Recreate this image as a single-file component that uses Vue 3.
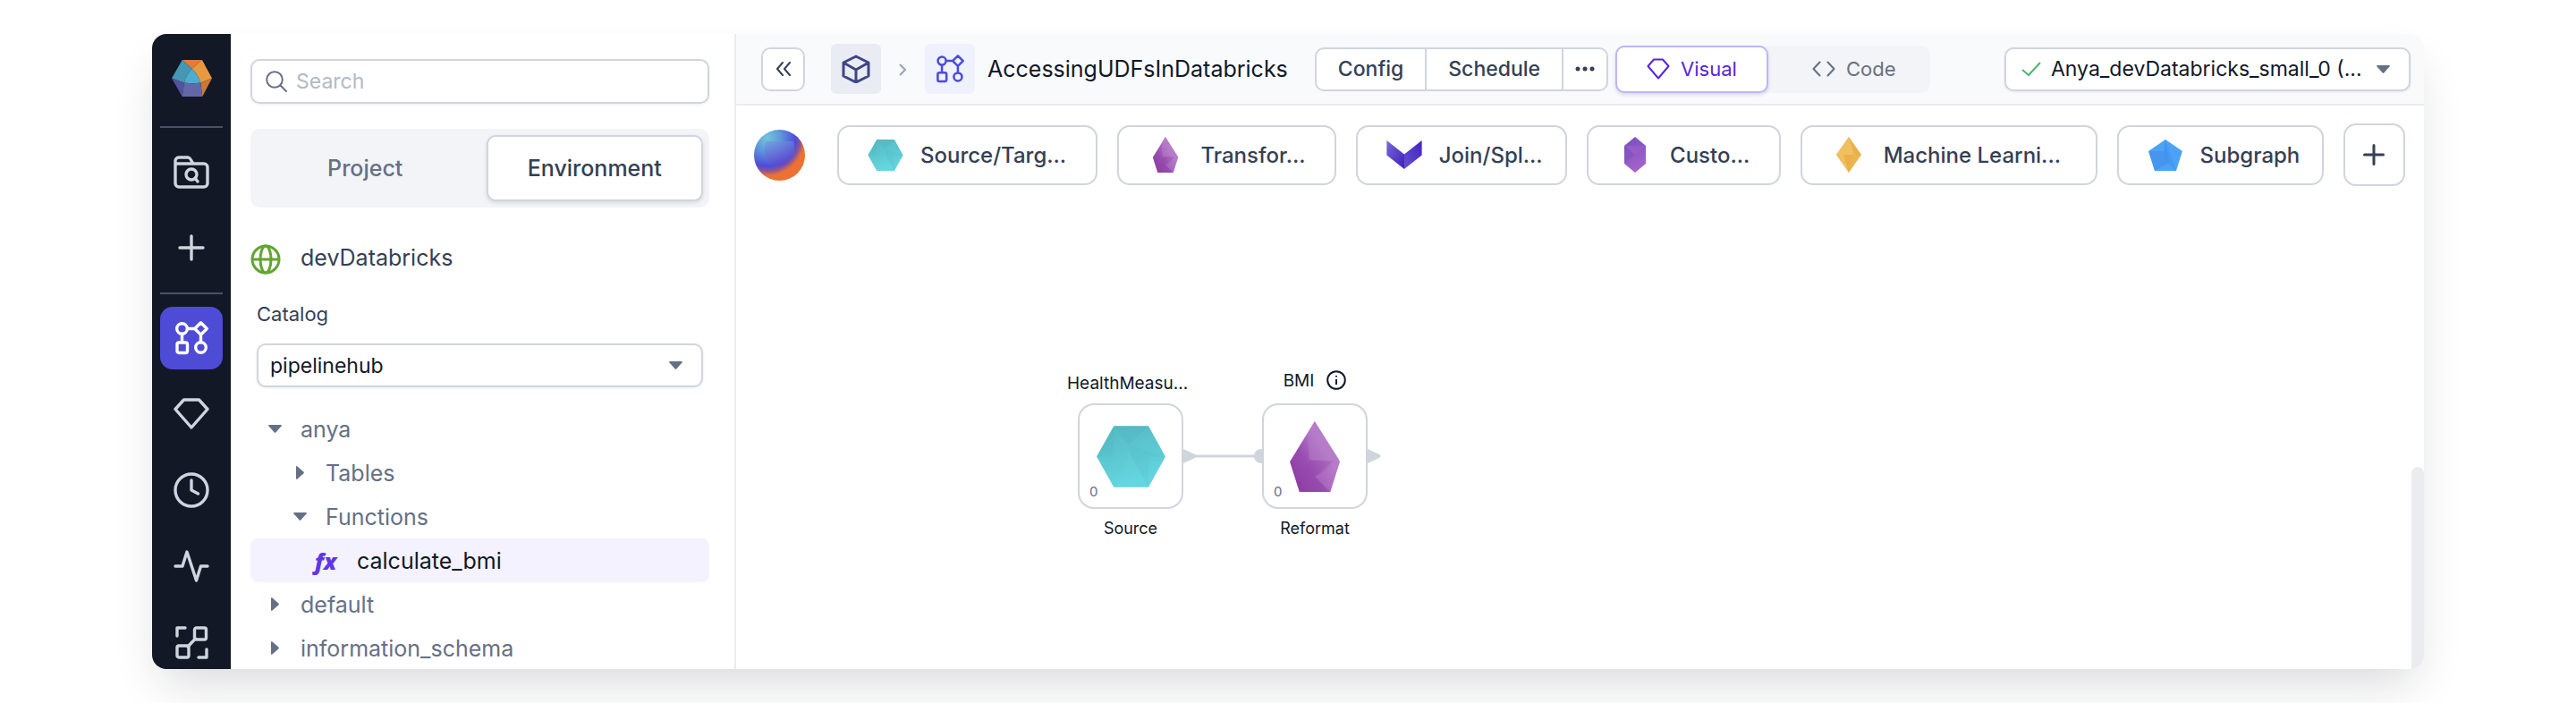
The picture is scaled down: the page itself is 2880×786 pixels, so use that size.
<script setup>
import { ref } from 'vue'

const search = ref('')
const panelTab = ref('Environment')
const view = ref('visual')

const tree = [
  { name: 'anya', level: 0, state: 'open' },
  { name: 'Tables', level: 1, state: 'closed' },
  { name: 'Functions', level: 1, state: 'open' },
  { name: 'calculate_bmi', level: 2, state: 'leaf' },
  { name: 'default', level: 0, state: 'closed' },
  { name: 'information_schema', level: 0, state: 'closed' },
]

const gems = [
  { label: 'Source/Targ...', icon: 'gem-source', share: 292 },
  { label: 'Transfor...', icon: 'gem-transform', share: 244 },
  { label: 'Join/Spl...', icon: 'gem-join', share: 236 },
  { label: 'Custo...', icon: 'gem-custom', share: 216 },
  { label: 'Machine Learni...', icon: 'gem-ml', share: 333 },
  { label: 'Subgraph', icon: 'gem-subgraph', share: 231 },
]
</script>

<template>
  <svg class="defs" aria-hidden="true">
    <defs>
      <linearGradient id="g-source" x1="0" y1="0" x2="0.3" y2="1">
        <stop offset="0" stop-color="#55b8c1" />
        <stop offset="1" stop-color="#63d5df" />
      </linearGradient>
      <linearGradient id="g-transform" x1="0.1" y1="0.8" x2="0.65" y2="0.35">
        <stop offset="0" stop-color="#8e3fa6" />
        <stop offset="0.45" stop-color="#9a4eb1" />
        <stop offset="1" stop-color="#b67cc8" />
      </linearGradient>
      <linearGradient id="g-join-l" x1="0" y1="0" x2="1" y2="1">
        <stop offset="0" stop-color="#7a68d6" />
        <stop offset="1" stop-color="#3d1fbb" />
      </linearGradient>
      <linearGradient id="g-join-r" x1="1" y1="0" x2="0" y2="1">
        <stop offset="0" stop-color="#4423c2" />
        <stop offset="1" stop-color="#674fd0" />
      </linearGradient>
      <linearGradient id="g-custom" x1="0" y1="0" x2="0.3" y2="1">
        <stop offset="0" stop-color="#7350bd" />
        <stop offset="1" stop-color="#a562cb" />
      </linearGradient>
    </defs>
    <symbol id="gem-source" viewBox="0 0 231 206">
      <path fill="url(#g-source)" d="M0 103 58 0h116l57 103-57 103H58z" />
      <path fill="#48a9b3" opacity=".14" d="M58 0h116l-67 64zM0 103 58 0v103z" />
      <path fill="#72dce6" opacity=".12" d="M58 0 174 206H58l49-103z" />
      <path fill="#4bb4bf" opacity=".14" d="M107 64 231 103h-57v103l-57-103z" />
    </symbol>
    <symbol id="gem-transform" viewBox="0 0 167 236">
      <path fill="url(#g-transform)" d="m83 0 84 135-32 101H32L0 135z" />
      <path fill="#b67cc8" opacity=".5" d="m83 0 84 130H66L58 45z" />
      <path fill="#9344aa" opacity=".3" d="m66 130 80 4-64 51 53 51H32l16-70z" />
      <path fill="#b67cc8" opacity=".4" d="m167 135-32 101-51-51z" />
    </symbol>
    <symbol id="gem-join" viewBox="0 0 38 31">
      <path fill="url(#g-join-l)" d="m0 0 19 15v16L0 16z" />
      <path fill="url(#g-join-r)" d="M38 0 19 15v16l19-15z" />
    </symbol>
    <symbol id="gem-custom" viewBox="0 0 24 40">
      <path fill="url(#g-custom)" d="m12 0 12 10v20L12 40 0 30V10z" />
      <path fill="#a15fc6" opacity=".6" d="M0 10h24L12 20z" />
      <path fill="#7449b8" opacity=".3" d="m0 10 12 10L0 30z" />
    </symbol>
    <symbol id="gem-ml" viewBox="0 0 28 40">
      <path fill="#edb54f" d="m14 0 14 20-14 20L0 20z" />
      <path fill="#f1c566" opacity=".7" d="m14 0-6 20H0zM14 0l6 20H8zM8 20l6 20L0 20z" />
      <path fill="#e9a945" d="m14 0 14 20h-8zM8 20h12l-6 20z" opacity=".4" />
    </symbol>
    <symbol id="gem-subgraph" viewBox="0 0 38 35">
      <path fill="#4ba3f8" d="m19 0 19 13-7 22H7L0 13z" />
      <path fill="#4489e4" opacity=".5" d="m19 0 4 26-16 9L0 13h17z" />
      <path fill="#3f8be8" opacity=".4" d="m19 0 12 35-14-13z" />
    </symbol>
  </svg>

  <div class="stage">
    <div class="window">
      <nav class="rail" aria-label="Main">
        <a class="brand" href="#" aria-label="Home">
          <svg viewBox="0 0 134 122" width="45" height="41">
            <path fill="#e67a37" d="M35 0h66L67 29z" />
            <path fill="#4598b3" d="M35 0 0 61l41 15q6-25 26-47z" />
            <path fill="#e8993f" d="m101 0 33 61-38 15Q88 48 67 29z" />
            <path fill="#4cadd0" d="M67 29Q88 48 96 76q-28 4-55 0 6-25 26-47z" />
            <path fill="#cb763b" d="m134 61-32 61-6-46z" />
            <path fill="#5254a0" d="m0 61 41 15-6 46z" />
            <path fill="#6367a8" d="M41 76q27 4 55 0l6 46H35z" />
          </svg>
        </a>
        <hr />
        <button class="rail-btn" aria-label="Browse projects">
          <svg viewBox="0 0 40 40" width="40" height="40">
            <path d="M2 8.500V33a4 4 0 0 0 4 4h28a4 4 0 0 0 4-4V15a4 4 0 0 0-4-4H22l-3-5a4 4 0 0 0-3-2H6a4 4 0 0 0-4 4.500zM2 11h20" />
            <circle cx="20" cy="23" r="6" /><path d="m24 27 3 4" />
          </svg>
        </button>
        <button class="rail-btn" aria-label="Create">
          <svg viewBox="0 0 40 40" width="40" height="40"><path d="M20 7v26M7 20h26" /></svg>
        </button>
        <hr />
        <button class="rail-btn active" aria-label="Pipelines">
          <svg viewBox="0 0 40 40" width="40" height="40">
            <circle cx="9.500" cy="9.500" r="5.800" /><rect x="4" y="25" width="11.500" height="11.500" rx="2" />
            <circle cx="30.500" cy="30.500" r="5.800" /><path d="M30.500 2.700 37.300 9.500 30.500 16.300 23.700 9.500zM15.500 9.500h8M9.500 15.500v9M30.500 16.500v8" />
          </svg>
        </button>
        <button class="rail-btn" aria-label="Gems">
          <svg viewBox="0 0 40 40" width="40" height="40"><path d="M11.500 4h17L38 14.500 20 35 2 14.500z" /></svg>
        </button>
        <button class="rail-btn" aria-label="Schedules">
          <svg viewBox="0 0 40 40" width="40" height="40"><circle cx="20" cy="20" r="18" /><path d="M20 9v11l7.500 4" /></svg>
        </button>
        <button class="rail-btn" aria-label="Monitoring">
          <svg viewBox="0 0 40 40" width="40" height="40"><path d="M2 20h8l5-16 10.500 32 5-16H38" /></svg>
        </button>
        <button class="rail-btn" aria-label="Lineage">
          <svg viewBox="0 0 40 40" width="40" height="40">
            <rect x="23.500" y="4" width="13" height="13" rx="2" /><rect x="4" y="24" width="13" height="13" rx="2" />
            <path d="m16 25 8.500-9M4 13V4h9M37 28v9h-9" />
          </svg>
        </button>
      </nav>

      <aside class="panel">
        <label class="search">
          <svg viewBox="0 0 24 24" width="24" height="24"><circle cx="10" cy="10" r="8.800" /><path d="m16.500 16.500 6.500 6.500" /></svg>
          <input v-model="search" type="text" placeholder="Search" aria-label="Search" />
        </label>

        <div class="tabs">
          <button
            v-for="tab in ['Project', 'Environment']"
            :key="tab"
            class="tab"
            :class="{ on: panelTab === tab }"
            @click="panelTab = tab"
          >{{ tab }}</button>
        </div>

        <div class="fabric">
          <svg viewBox="0 0 34 34" width="34" height="34">
            <circle cx="17" cy="17" r="15" /><ellipse cx="17" cy="17" rx="6" ry="15" /><path d="M2 17h30" />
          </svg>
          <span>devDatabricks</span>
        </div>

        <div class="catalog">
          <label for="catalog">Catalog</label>
          <div class="select">
            <select id="catalog"><option>pipelinehub</option></select>
            <svg class="caret" viewBox="0 0 15 9" width="15" height="9"><path d="M1 0h13q1.500.300.500 1.500L8.500 8.300q-1 1-2 0L.500 1.500Q-.500.300 1 0z" /></svg>
          </div>
        </div>

        <ul class="tree">
          <li v-for="row in tree" :key="row.name">
            <button class="tree-row" :class="['level-' + row.level, row.state]">
              <span class="twist">
                <svg v-if="row.state === 'open'" viewBox="0 0 15 9" width="15" height="9"><path d="M1 0h13q1.500.300.500 1.500L8.500 8.300q-1 1-2 0L.500 1.500Q-.500.300 1 0z" /></svg>
                <svg v-else-if="row.state === 'closed'" viewBox="0 0 9 15" width="9" height="15"><path d="M0 1v13q.300 1.500 1.500.500l6.800-6q1-1 0-2L1.500.500Q.300-.500 0 1z" /></svg>
                <span v-else class="fx">fx</span>
              </span>
              <span>{{ row.name }}</span>
            </button>
          </li>
        </ul>
      </aside>

      <main class="main">
        <header class="topbar">
          <button class="collapse" aria-label="Collapse panel">
            <svg viewBox="0 0 18 16" width="18" height="16"><path d="M8 1 2 8l6 7M16 1l-6 7 6 7" /></svg>
          </button>
          <a class="tile project" href="#" aria-label="Project">
            <svg viewBox="0 0 32 32" width="32" height="32"><path d="m16 2 14 7v15l-14 7-14-7V9zM2 9l14 8 14-8M16 17v14" /></svg>
          </a>
          <svg class="chevron" viewBox="0 0 8 14" width="8" height="14"><path d="m1 1 6 6-6 6" /></svg>
          <span class="tile pipeline">
            <svg viewBox="0 0 40 40" width="34" height="34">
              <circle cx="9.500" cy="9.500" r="5.300" /><rect x="4" y="25" width="11.500" height="11.500" rx="2" />
              <circle cx="30.500" cy="30.500" r="5.300" /><path d="M30.500 2.700 37.300 9.500 30.500 16.300 23.700 9.500zM15.500 9.500h8M9.500 15.500v9M30.500 16.500v8" />
            </svg>
          </span>
          <h1>AccessingUDFsInDatabricks</h1>

          <div class="group">
            <button>Config</button>
            <button>Schedule</button>
            <button aria-label="More">
              <svg viewBox="0 0 22 6" width="22" height="6"><circle cx="3" cy="3" r="2.500" /><circle cx="11" cy="3" r="2.500" /><circle cx="19" cy="3" r="2.500" /></svg>
            </button>
          </div>

          <div class="toggle">
            <button :class="{ on: view === 'visual' }" @click="view = 'visual'">
              <svg viewBox="0 0 26 24" width="26" height="24"><path d="M8 1.500h10l6.500 7.500L13 22.500 1.500 9z" /></svg>
              <span>Visual</span>
            </button>
            <button :class="{ on: view === 'code' }" @click="view = 'code'">
              <svg viewBox="0 0 26 24" width="26" height="24"><path d="m8.500 4.500-7 7.500 7 7.500M17.500 4.500l7 7.500-7 7.500" /></svg>
              <span>Code</span>
            </button>
          </div>

          <div class="select cluster">
            <svg class="check" viewBox="0 0 22 16" width="22" height="16"><path d="m1 9 7 6L21 1" /></svg>
            <select aria-label="Cluster"><option>Anya_devDatabricks_small_0 (...</option></select>
            <svg class="caret" viewBox="0 0 15 9" width="15" height="9"><path d="M1 0h13q1.500.300.500 1.500L8.500 8.300q-1 1-2 0L.500 1.500Q-.500.300 1 0z" /></svg>
          </div>
        </header>

        <div class="toolbar">
          <button class="orb" aria-label="Copilot">
            <svg viewBox="0 0 57 57" width="57" height="57">
              <defs>
                <radialGradient id="orb-fill" cx="0.26" cy="0.16" r="0.9">
                  <stop offset="0" stop-color="#70c6db" />
                  <stop offset="0.300" stop-color="#6096dc" />
                  <stop offset="0.620" stop-color="#4d4cd8" />
                  <stop offset="0.720" stop-color="#8a5496" />
                  <stop offset="0.820" stop-color="#ec7133" />
                </radialGradient>
                <linearGradient id="orb-core" x1="0.3" y1="0" x2="0.7" y2="1">
                  <stop offset="0" stop-color="#7191e0" />
                  <stop offset="1" stop-color="#5b3fc9" />
                </linearGradient>
              </defs>
              <circle cx="28.500" cy="28.500" r="28.500" fill="url(#orb-fill)" />
              <path d="M14 13h30q4 10-4 21-6 8-15 6-15-5-13-20z" fill="url(#orb-core)" opacity=".7" />
            </svg>
          </button>
          <div class="gems">
            <button v-for="gem in gems" :key="gem.label" class="gem" :style="{ flexGrow: gem.share }">
              <svg :class="gem.icon"><use :href="'#' + gem.icon" /></svg>
              <span>{{ gem.label }}</span>
            </button>
            <button class="add" aria-label="Add gem">
              <svg viewBox="0 0 24 24" width="24" height="24"><path d="M12 1.500v21M1.500 12h21" /></svg>
            </button>
          </div>
        </div>

        <section class="canvas" aria-label="Pipeline canvas">
          <svg class="edges" viewBox="0 0 340 16" width="340" height="16">
            <path class="fill" d="M118 0l13 6q3 2 0 4l-13 6zM324 0l13 6q3 2 0 4l-13 6z" />
            <circle class="fill" cx="205" cy="8" r="8" />
            <path class="wire" d="M130 8h70" />
          </svg>
          <div class="node source">
            <div class="node-title">HealthMeasu...</div>
            <button class="box" aria-label="HealthMeasurements">
              <svg width="77" height="69"><use href="#gem-source" /></svg>
              <span class="count">0</span>
            </button>
            <div class="node-kind">Source</div>
          </div>
          <div class="node reformat">
            <div class="node-title">
              <span>BMI</span>
              <svg viewBox="0 0 22 22" width="22" height="22"><circle cx="11" cy="11" r="9.800" /><path d="M11 10v6M11 6v1.500" /></svg>
            </div>
            <button class="box" aria-label="BMI">
              <svg width="56" height="79"><use href="#gem-transform" /></svg>
              <span class="count">0</span>
            </button>
            <div class="node-kind">Reformat</div>
          </div>
          <div class="scroll-thumb"></div>
        </section>
      </main>
    </div>
  </div>
</template>

<style>
body { background: #fff; }
</style>

<style scoped>
* { box-sizing: border-box; }
.defs { position: absolute; width: 0; height: 0; }
.stage {
  height: 100vh;
  padding: 38px 170px;
  overflow: hidden;
  font-family: Inter, "Liberation Sans", sans-serif;
  font-size: 25px;
  color: #344054;
}
button, input, select { font: inherit; color: inherit; margin: 0; padding: 0; }
button { border: 0; background: none; cursor: pointer; }
svg { display: block; flex: none; }
.window {
  display: flex;
  height: 100%;
  border-radius: 16px;
  overflow: hidden;
  background: #fff;
  box-shadow: 0 26px 52px -12px rgba(16, 24, 40, 0.17);
}

.rail {
  flex: none;
  width: 88px;
  padding: 29px 9px 0;
  display: flex;
  flex-direction: column;
  align-items: center;
  background: #121826;
}
.brand { display: block; margin-bottom: 33px; }
.rail hr { flex: none; width: 100%; height: 2px; margin: 0 0 14px; border: 0; background: #475467; }
.rail-btn {
  flex: none;
  width: 70px;
  height: 70px;
  margin-bottom: 15px;
  display: grid;
  place-items: center;
  border-radius: 14px;
}
.rail-btn svg { fill: none; stroke: #d0d5dd; stroke-width: 3.400; stroke-linecap: round; stroke-linejoin: round; }
.rail .active { background: #4e4bd6; }
.rail .active svg { stroke: #fff; }

.panel {
  flex: none;
  width: 565px;
  padding: 28px 28px 0 22px;
  border-right: 2px solid #eaecf0;
  overflow: hidden;
}
.search {
  display: flex;
  align-items: center;
  gap: 10px;
  height: 50px;
  padding: 0 15px;
  border: 2px solid #d0d5dd;
  border-radius: 10px;
  box-shadow: 0 1px 3px rgba(16, 24, 40, 0.08);
}
.search svg { fill: none; stroke: #667085; stroke-width: 2; stroke-linecap: round; }
.search input { flex: 1; min-width: 0; border: 0; outline: 0; background: none; font-size: 23px; }
.search input::placeholder { color: #b3b9c5; opacity: 1; }

.tabs { display: grid; grid-template-columns: 1fr 1fr; gap: 14px; height: 88px; margin-top: 28px; padding: 7px; border-radius: 10px; background: #f2f4f7; }
.tab { border-radius: 10px; font-weight: 500; color: #667085; }
.tab.on { background: #fff; border: 2px solid #d0d5dd; color: #344054; box-shadow: 0 2px 4px rgba(16, 24, 40, 0.12); }

.fabric { display: flex; align-items: flex-start; gap: 22px; height: 34px; margin-top: 41px; line-height: 30px; }
.fabric svg { fill: none; stroke: #62a431; stroke-width: 3; }
.catalog { margin: 30px 7px 0; font-size: 23px; }
.catalog label { display: block; font-size: 22px; line-height: 28px; margin-bottom: 19px; }
.select {
  display: grid;
  align-items: center;
  height: 49px;
  border: 2px solid #d0d5dd;
  border-radius: 10px;
  background: #fff;
  box-shadow: 0 1px 3px rgba(16, 24, 40, 0.08);
}
.select > * { grid-area: 1 / 1; }
.select select { width: 100%; height: 100%; padding: 0 48px 0 13px; border: 0; outline: 0; appearance: none; background: none; color: #101828; }
.caret { justify-self: end; margin-right: 21px; fill: #667085; pointer-events: none; }

.tree { list-style: none; margin: 22px 0 0; padding: 0; }
.tree-row { display: flex; align-items: center; width: 100%; height: 49px; border-radius: 8px; color: #667085; text-align: left; }
.twist { flex: none; display: grid; place-items: center; width: 30px; margin-right: 14px; fill: #667085; }
.level-0 { padding-left: 12px; }
.level-1 { padding-left: 40px; }
.level-2 { padding-left: 69px; }
.leaf { background: #f4f2fe; color: #101828; }
.leaf .twist { margin-right: 20px; }
.fx { font-family: "Open Sans", sans-serif; font-style: italic; font-weight: 800; color: #6236e8; }

.main { flex: 1; min-width: 0; display: flex; flex-direction: column; }
.topbar {
  flex: none;
  display: flex;
  align-items: center;
  height: 80px;
  padding: 0 15px 0 28px;
  border-bottom: 2px solid #eaecf0;
  background: #f9fafc;
}
.collapse { width: 49px; height: 49px; margin-right: 29px; display: grid; place-items: center; border: 2px solid #d0d5dd; border-radius: 10px; background: #fff; }
.collapse svg { fill: none; stroke: #344054; stroke-width: 2; stroke-linecap: round; stroke-linejoin: round; }
.tile { width: 56px; height: 56px; display: grid; place-items: center; border-radius: 6px; }
.tile svg { fill: none; stroke-width: 3; stroke-linecap: round; stroke-linejoin: round; }
.project { background: #eaecf3; }
.project svg { stroke: #3e4784; }
.pipeline { background: #eff1ff; }
.pipeline svg { stroke: #4e4bd6; }
.chevron { margin: 2px 21px 0 20px; fill: none; stroke: #98a2b3; stroke-width: 2; }
h1 { margin: 0 30px 0 14px; font-size: 25px; font-weight: 400; color: #101828; white-space: nowrap; }
.group { display: flex; height: 49px; margin-right: 8px; border: 2px solid #d0d5dd; border-radius: 10px; background: #fff; font-size: 23px; font-weight: 500; }
.group button { padding: 0 24px; }
.group button + button { border-left: 2px solid #d0d5dd; }
.group button:last-child { padding: 0 13px; fill: #344054; }
.toggle { display: flex; height: 53px; border-radius: 10px; background: #f2f4f7; font-size: 22px; }
.toggle button { display: flex; align-items: center; gap: 12px; padding: 0 33px; border: 2px solid transparent; border-radius: 10px; color: #667085; }
.toggle button:last-child { padding: 0 37px 0 47px; }
.toggle svg { fill: none; stroke: currentColor; stroke-width: 2; stroke-linecap: round; stroke-linejoin: round; }
.toggle .on { background: #fff; border-color: #bdb4fe; color: #5925dc; box-shadow: 0 2px 4px rgba(16, 24, 40, 0.14); }
.cluster { width: 454px; margin-left: auto; font-size: 23px; }
.cluster select { padding-left: 50px; }
.check { margin-left: 17px; fill: none; stroke: #47b872; stroke-width: 2; }

.toolbar { flex: none; display: flex; align-items: center; gap: 36px; padding: 20px 21px 20px 20px; }
.gems { flex: 1; min-width: 0; display: flex; align-items: center; gap: 22px; }
.gem {
  flex: 1 1 0;
  min-width: 0;
  height: 67px;
  display: flex;
  align-items: center;
  gap: 19px;
  border: 2px solid #d0d5dd;
  border-radius: 14px;
  background: #fff;
  font-size: 24px;
  font-weight: 500;
  white-space: nowrap;
}
.gem svg { width: 40px; height: 40px; margin-left: 32px; }
.gem .gem-source, .gem .gem-subgraph { height: 35px; }
.gem .gem-join { height: 32px; }
.add { flex: none; width: 69px; height: 70px; display: grid; place-items: center; border: 2px solid #d0d5dd; border-radius: 14px; }
.add svg { stroke: #344054; stroke-width: 3; stroke-linecap: round; }

.canvas { position: relative; flex: 1; min-height: 0; overflow: hidden; font-size: 18px; color: #101828; }
.node { position: absolute; top: 188px; width: 118px; display: flex; flex-direction: column; align-items: center; }
.source { left: 382px; }
.reformat { left: 588px; }
.node-title { display: flex; align-items: center; gap: 14px; width: 142px; height: 24px; margin-bottom: 11px; font-size: 19px; white-space: nowrap; }
.reformat .node-title { justify-content: center; margin: -3px 0 14px; }
.node-title svg { fill: none; stroke: #101828; stroke-width: 2; }
.box { position: relative; width: 118px; height: 118px; display: grid; place-items: center; border: 2px solid #d0d5dd; border-radius: 18px; background: #fff; }
.count { position: absolute; left: 11px; bottom: 8px; font-size: 15px; line-height: 18px; color: #667085; }
.node-kind { margin-top: 10px; line-height: 24px; }
.edges { position: absolute; left: 382px; top: 274px; }
.edges .fill { fill: #d0d5dd; }
.edges .wire { stroke: #d0d5dd; stroke-width: 3; }
.scroll-thumb { position: absolute; right: 0; top: 294px; bottom: 0; width: 14px; border-radius: 7px 7px 0 0; background: #eaecf0; }
</style>
